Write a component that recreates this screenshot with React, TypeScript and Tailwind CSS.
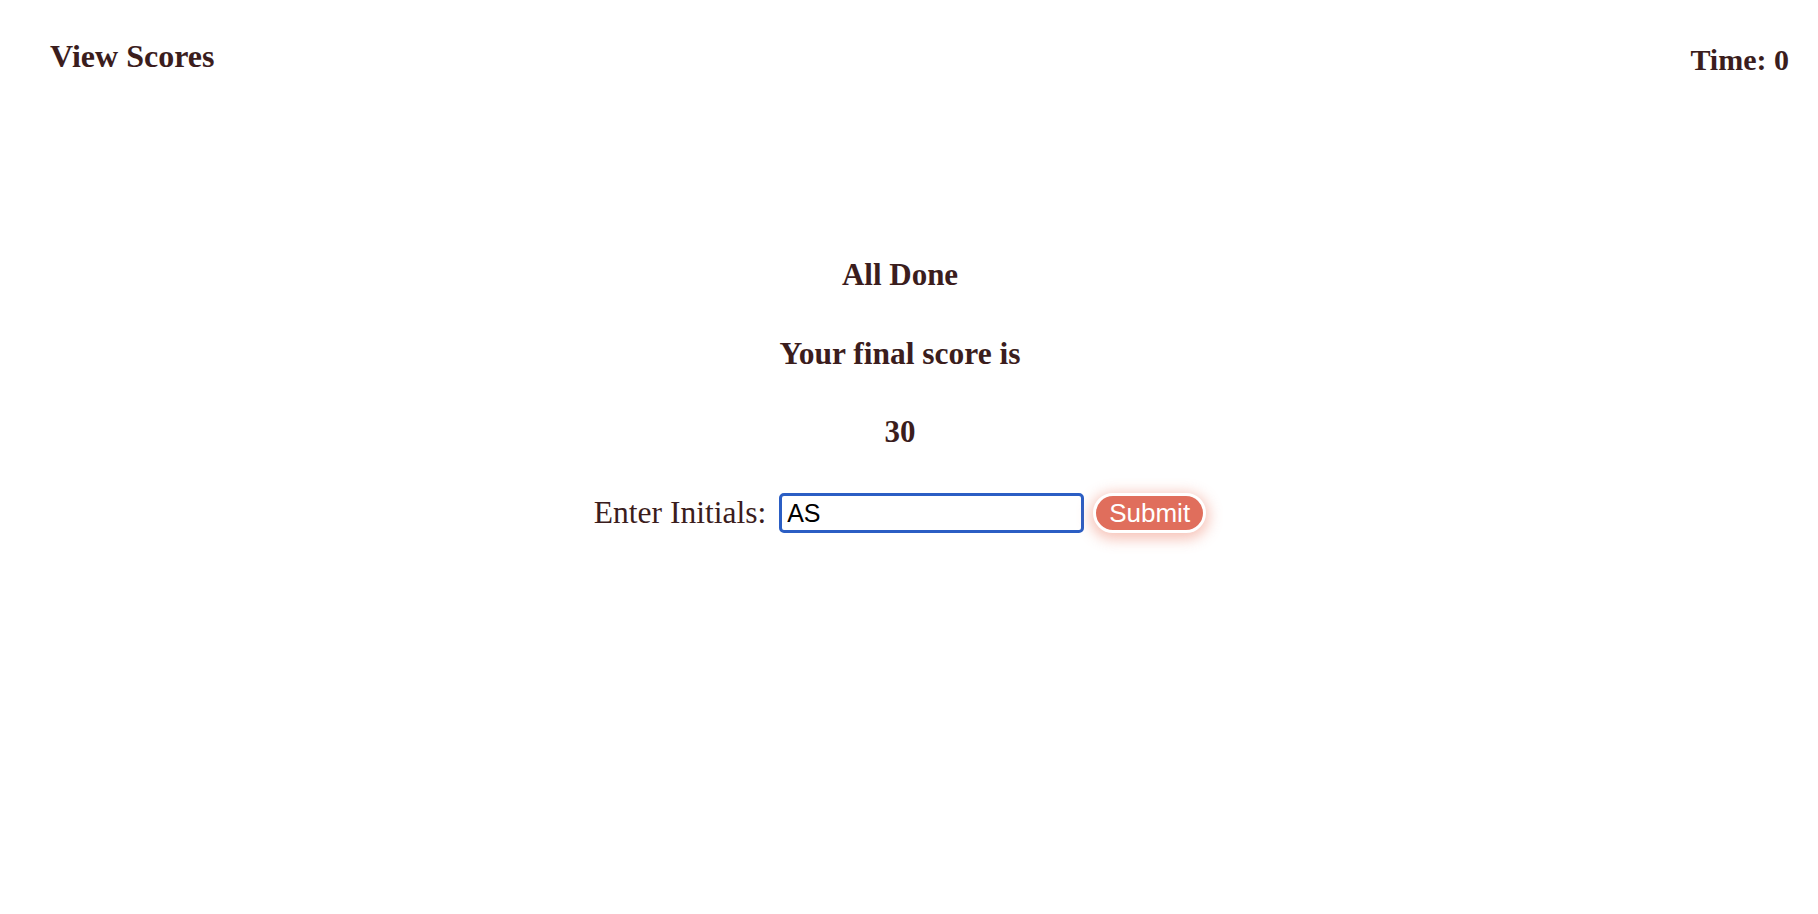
import React from "react";

export default function App() {
  return (
    <div className="min-h-[914px] w-full bg-white text-[#3b1d1d]" style={{ fontFamily: '"Liberation Serif", "Times New Roman", serif' }}>
      <header className="flex items-start justify-between">
        <a className="ml-[50px] mt-[38px] block text-[32px] font-bold leading-[36px] cursor-pointer">View Scores</a>
        <div className="mr-[29px] mt-[42px] text-[30px] font-bold leading-[36px]">Time: 0</div>
      </header>
      <main className="flex flex-col items-center pr-[18px]">
        <h2 className="mt-[179px] text-[31px] font-bold leading-[36px]">All Done</h2>
        <h2 className="mt-[43px] text-[31.5px] font-bold leading-[36px]">Your final score is</h2>
        <h2 className="mt-[42px] text-[31px] font-bold leading-[36px]">30</h2>
        <div className="mt-[43px] flex h-[40px] items-center">
          <label className="text-[31.5px] leading-[36px]">Enter Initials:</label>
          <input
            defaultValue="AS"
            className="ml-[13px] h-[40px] w-[305px] rounded-[5px] border-[3px] border-[#2b5ec4] bg-white px-[5px] text-[25px] text-black outline-none"
            style={{ fontFamily: '"Liberation Sans", Arial, sans-serif' }}
          />
          <button
            className="ml-[9px] flex h-[40px] w-[113px] items-center justify-center rounded-full border-[3px] border-white bg-[#e06e5c] text-[26px] leading-none text-white shadow-[0_3px_14px_3px_rgba(236,120,96,0.45)]"
            style={{ fontFamily: '"Liberation Sans", Arial, sans-serif' }}
          >
            Submit
          </button>
        </div>
      </main>
    </div>
  );
}
